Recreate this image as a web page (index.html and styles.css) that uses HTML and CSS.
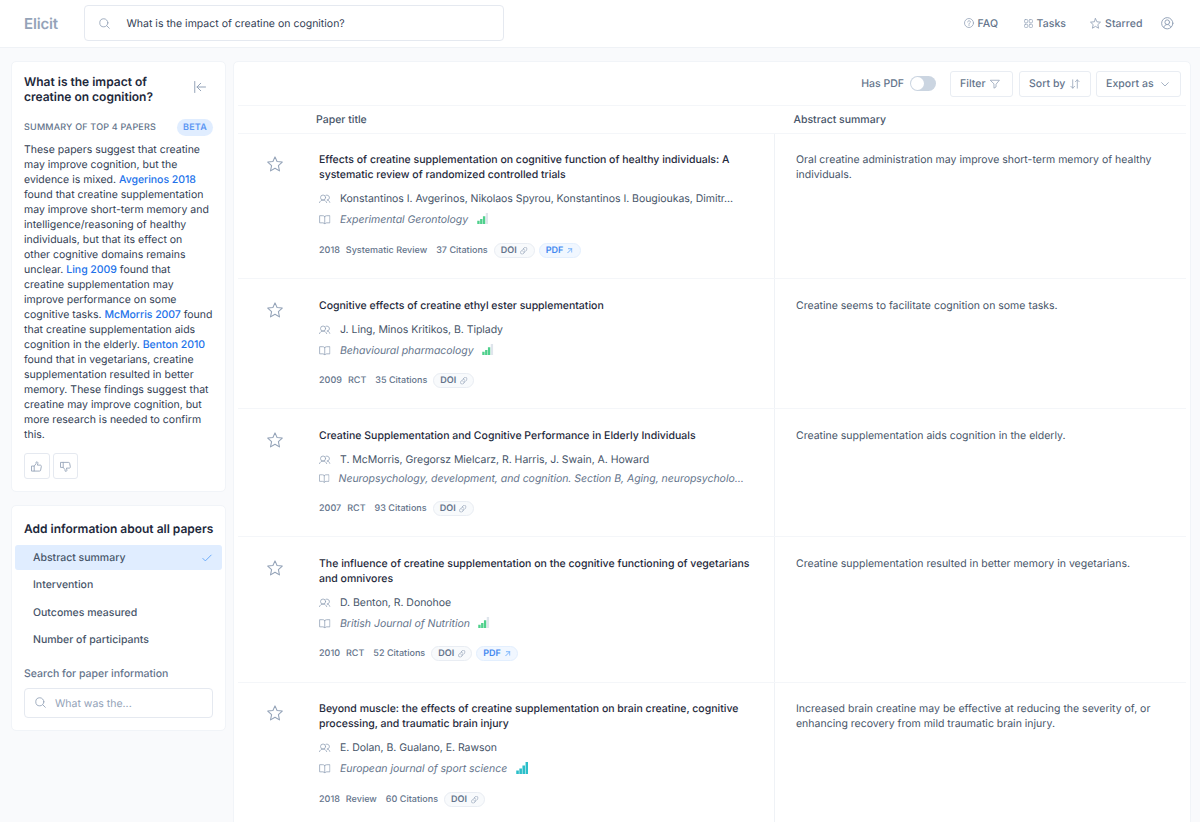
FILE: index.html
```html
<!DOCTYPE html>
<html lang="en">
<head>
<meta charset="utf-8">
<title>Elicit</title>
<link rel="stylesheet" href="styles.css">
</head>
<body>
<svg class="sprite" aria-hidden="true">
  <symbol id="search" viewBox="0 0 24 24"><circle cx="10.5" cy="10.5" r="8.8"/><path d="M17 17 22.500 22.500"/></symbol>
  <symbol id="star" viewBox="0 0 24 24"><path d="M12 1.300 15.100 8.300 22.900 9.100 17.100 14.400 18.700 22.300 12 18.300 5.300 22.300 6.900 14.400 1.100 9.100 8.900 8.300Z"/></symbol>
  <symbol id="users" viewBox="0 0 24 18"><circle cx="8.500" cy="6.500" r="5.300"/><path d="M1 17c1.500-3.500 4-5.200 7.500-5.200s6 1.700 7.500 5.200M14.500 1.700a5.200 5.200 0 1 1 2 10c3 0 5 2 6.500 5.300"/></symbol>
  <symbol id="book" viewBox="0 0 24 20"><path d="M12 3.500c-1-1.500-2.500-2-4-2H1.200v15H8c2 0 3 .8 4 2.500 1-1.700 2-2.500 4-2.500h6.800v-15H16c-1.500 0-3 .5-4 2Zm0 0v15"/></symbol>
  <symbol id="link" viewBox="0 0 24 24"><path d="m10 6 3.500-3.500a5 5 0 0 1 7.500 7.500l-5 5a4.600 4.600 0 0 1-7-.5M14 18l-3.500 3.500A5 5 0 0 1 3 14l5-5a4.600 4.600 0 0 1 7 .5"/></symbol>
  <symbol id="out" viewBox="0 0 24 24"><path d="M3 21 21 3M6 3h15v15"/></symbol>
  <symbol id="bars" viewBox="0 0 24 24"><path d="M0 17h5.200v7H0zM6.200 13h5.200v11H6.200zM12.400 7h5.200v17h-5.200z"/><path class="last" d="M18.600 0h5.200v24h-5.200z"/></symbol>
</svg>

<header class="topbar">
  <div class="logo">Elicit</div>
  <div class="search"><svg class="icon"><use href="#search"/></svg><span>What is the impact of creatine on cognition?</span></div>
  <nav class="nav">
    <a class="faq"><svg class="icon" viewBox="0 0 24 24"><circle cx="12" cy="12" r="10.800"/><path d="M8.800 9.500c0-4 6.500-4 6.500 0 0 2.300-3.300 2.300-3.300 5M12 16.800v1.200"/></svg>FAQ</a>
    <a class="tasks"><svg class="icon" viewBox="0 0 24 24"><rect x="1.500" y="1.500" width="8.500" height="8.500" rx="2"/><rect x="14" y="1.500" width="8.500" height="8.500" rx="2"/><rect x="1.500" y="14" width="8.500" height="8.500" rx="2"/><rect x="14" y="14" width="8.500" height="8.500" rx="2"/></svg>Tasks</a>
    <a class="starred"><svg class="icon"><use href="#star"/></svg>Starred</a>
    <svg class="icon user" viewBox="0 0 24 24"><circle cx="12" cy="12" r="10.800"/><circle cx="12" cy="10" r="4.500"/><path d="M5.500 20c.5-3.500 3-5.500 6.500-5.500s6 2 6.500 5.500"/></svg>
  </nav>
</header>

<div class="layout">
  <aside class="side">
    <section class="card summary">
      <div class="summary-head">
        <h1>What is the impact of creatine on cognition?</h1>
        <svg class="icon collapse" viewBox="0 0 24 24"><path d="M1.500 1v22M23 12H6M13.500 4.500 6 12l7.500 7.500"/></svg>
      </div>
      <div class="summary-label"><span>SUMMARY OF TOP 4 PAPERS</span><b class="beta">BETA</b></div>
      <p class="summary-text">These papers suggest that creatine<br>may improve cognition, but the<br>evidence is mixed. <a>Avgerinos 2018</a><br>found that creatine supplementation<br>may improve short-term memory and<br>intelligence/reasoning of healthy<br>individuals, but that its effect on<br>other cognitive domains remains<br>unclear. <a>Ling 2009</a> found that<br>creatine supplementation may<br>improve performance on some<br>cognitive tasks. <a>McMorris 2007</a> found<br>that creatine supplementation aids<br>cognition in the elderly. <a>Benton 2010</a><br>found that in vegetarians, creatine<br>supplementation resulted in better<br>memory. These findings suggest that<br>creatine may improve cognition, but<br>more research is needed to confirm<br>this.</p>
      <div class="votes">
        <span class="vote"><svg class="icon" viewBox="0 0 24 24"><path d="M2 11h5v11H2zM7 11l4-5V2.500C13.500 1 15.500 2.500 15 5l-1 4h6c2 0 2.800 1.300 2.500 3l-1.500 8c-.3 1.500-1 2-2.500 2H7"/></svg></span>
        <span class="vote"><svg class="icon" viewBox="0 0 24 24"><path d="M2 3h5v11H2zM7 14l4 5v3c2.500 1.500 4.500 0 4-2.500l-1-4h6c2 0 2.800-1.300 2.500-3L21 5c-.3-1.500-1-2-2.500-2H7"/></svg></span>
      </div>
    </section>
    <section class="card info">
      <h2>Add information about all papers</h2>
      <ul class="fields">
        <li class="active">Abstract summary<svg class="icon check" viewBox="0 0 24 24"><path d="m2 13 6 6L22 5"/></svg></li>
        <li>Intervention</li>
        <li>Outcomes measured</li>
        <li>Number of participants</li>
      </ul>
      <label class="find-label">Search for paper information</label>
      <div class="find"><svg class="icon"><use href="#search"/></svg><span>What was the...</span></div>
    </section>
  </aside>

  <main class="panel">
    <div class="toolbar">
      <span class="haspdf">Has PDF</span><span class="toggle"></span>
      <span class="btn filter">Filter<svg class="icon" viewBox="0 0 24 24"><path d="M1.500 3h21L14.500 12.500V19l-5 3v-9.500Z"/></svg></span>
      <span class="btn sort">Sort by<svg class="icon" viewBox="0 0 24 24"><path d="M6.500 2v20M2 17.500 6.500 22l4.500-4.500M17.500 22V2M13 6.500 17.500 2 22 6.500"/></svg></span>
      <span class="btn export">Export as<svg class="icon" viewBox="0 0 24 24"><path d="m2 8 10 10L22 8"/></svg></span>
    </div>
    <div class="thead"><span>Paper title</span><span>Abstract summary</span></div>

    <article class="row first">
      <svg class="icon star"><use href="#star"/></svg>
      <div class="paper">
        <h3>Effects of creatine supplementation on cognitive function of healthy individuals: A<br>systematic review of randomized controlled trials</h3>
        <div class="line authors"><svg class="icon"><use href="#users"/></svg>Konstantinos I. Avgerinos, Nikolaos Spyrou, Konstantinos I. Bougioukas, Dimitr...</div>
        <div class="line journal"><svg class="icon"><use href="#book"/></svg><i>Experimental Gerontology</i><svg class="bars"><use href="#bars"/></svg></div>
        <div class="meta"><span>2018</span><span class="kind">Systematic Review</span><span>37 Citations</span><b class="pill">DOI<svg class="icon"><use href="#link"/></svg></b><b class="pill pdf">PDF<svg class="icon"><use href="#out"/></svg></b></div>
      </div>
      <p class="abstract">Oral creatine administration may improve short-term memory of healthy<br>individuals.</p>
    </article>

    <article class="row short">
      <svg class="icon star"><use href="#star"/></svg>
      <div class="paper">
        <h3>Cognitive effects of creatine ethyl ester supplementation</h3>
        <div class="line authors"><svg class="icon"><use href="#users"/></svg>J. Ling, Minos Kritikos, B. Tiplady</div>
        <div class="line journal"><svg class="icon"><use href="#book"/></svg><i>Behavioural pharmacology</i><svg class="bars"><use href="#bars"/></svg></div>
        <div class="meta"><span>2009</span><span class="kind">RCT</span><span>35 Citations</span><b class="pill">DOI<svg class="icon"><use href="#link"/></svg></b></div>
      </div>
      <p class="abstract">Creatine seems to facilitate cognition on some tasks.</p>
    </article>

    <article class="row compact">
      <svg class="icon star"><use href="#star"/></svg>
      <div class="paper">
        <h3>Creatine Supplementation and Cognitive Performance in Elderly Individuals</h3>
        <div class="line authors"><svg class="icon"><use href="#users"/></svg>T. McMorris, Gregorsz Mielcarz, R. Harris, J. Swain, A. Howard</div>
        <div class="line journal"><svg class="icon"><use href="#book"/></svg><i>Neuropsychology, development, and cognition. Section B, Aging, neuropsycholo...</i></div>
        <div class="meta"><span>2007</span><span class="kind">RCT</span><span>93 Citations</span><b class="pill">DOI<svg class="icon"><use href="#link"/></svg></b></div>
      </div>
      <p class="abstract">Creatine supplementation aids cognition in the elderly.</p>
    </article>

    <article class="row">
      <svg class="icon star"><use href="#star"/></svg>
      <div class="paper">
        <h3>The influence of creatine supplementation on the cognitive functioning of vegetarians<br>and omnivores</h3>
        <div class="line authors"><svg class="icon"><use href="#users"/></svg>D. Benton, R. Donohoe</div>
        <div class="line journal"><svg class="icon"><use href="#book"/></svg><i>British Journal of Nutrition</i><svg class="bars"><use href="#bars"/></svg></div>
        <div class="meta"><span>2010</span><span class="kind">RCT</span><span>52 Citations</span><b class="pill">DOI<svg class="icon"><use href="#link"/></svg></b><b class="pill pdf">PDF<svg class="icon"><use href="#out"/></svg></b></div>
      </div>
      <p class="abstract">Creatine supplementation resulted in better memory in vegetarians.</p>
    </article>

    <article class="row final">
      <svg class="icon star"><use href="#star"/></svg>
      <div class="paper">
        <h3>Beyond muscle: the effects of creatine supplementation on brain creatine, cognitive<br>processing, and traumatic brain injury</h3>
        <div class="line authors"><svg class="icon"><use href="#users"/></svg>E. Dolan, B. Gualano, E. Rawson</div>
        <div class="line journal"><svg class="icon"><use href="#book"/></svg><i>European journal of sport science</i><svg class="bars full"><use href="#bars"/></svg></div>
        <div class="meta"><span>2018</span><span class="kind">Review</span><span>60 Citations</span><b class="pill">DOI<svg class="icon"><use href="#link"/></svg></b></div>
      </div>
      <p class="abstract">Increased brain creatine may be effective at reducing the severity of, or<br>enhancing recovery from mild traumatic brain injury.</p>
    </article>
  </main>
</div>
</body>
</html>
```
FILE: styles.css
```css
* { box-sizing: border-box; }
body {
  margin: 0; height: 822px; overflow: hidden;
  background: #f9fafc; color: #475569;
  font: 400 10.5px/15px Inter, sans-serif;
  text-rendering: geometricPrecision;
  white-space: nowrap;
}
h1, h2, h3, p, ul { margin: 0; padding: 0; }
ul { list-style: none; }
.sprite { display: none; }
.icon { fill: none; stroke: #94a3b8; stroke-width: 1.9; stroke-linejoin: round; stroke-linecap: round; flex: none; width: 11px; height: 11px; overflow: visible; }

.topbar { display: flex; align-items: flex-start; height: 48px; padding: 5px 26.500px 0 24px; background: #fff; border-bottom: 1px solid #eff2f6; }
.logo { width: 60px; padding-top: 1px; color: #94a3b8; font-size: 15px; font-weight: 600; line-height: 36px; letter-spacing: -.15px; }
.search { display: flex; align-items: center; gap: 16.500px; width: 420px; height: 36px; padding-left: 14px; border: 1px solid #e5e9f0; border-radius: 4px; color: #334155; }
.nav { display: flex; align-items: center; margin-left: auto; height: 36px; color: #64748b; font-weight: 500; letter-spacing: .05px; }
.nav a { display: flex; align-items: center; gap: 4px; }
.nav .faq { margin-right: 25.500px; }
.nav .tasks { margin-right: 24px; }
.nav .faq .icon { width: 10px; height: 10px; }
.nav .tasks .icon { width: 9px; height: 9px; }
.nav .starred { margin-right: 18.500px; }
.nav .user { width: 12.500px; height: 12.500px; }

.layout { display: flex; gap: 7px; padding: 13px 9px 0 11px; }
.card, .panel { background: #fff; border: 1px solid #f1f4f8; border-radius: 5px; }
.side { width: 215px; flex: none; display: flex; flex-direction: column; gap: 13px; }
.card { padding: 0 12px; }
.summary { height: 431px; padding-top: 12px; }
.summary-head { display: flex; justify-content: space-between; padding-right: 7px; }
.summary h1 { width: 140px; white-space: normal; font-size: 12px; font-weight: 600; line-height: 15px; color: #1e293b; }
.collapse { width: 12px; height: 12px; margin-top: 6.500px; stroke-width: 2; }
.summary-label { display: flex; align-items: center; justify-content: space-between; margin-top: 15px; height: 17px; font-size: 9px; font-weight: 500; color: #64748b; letter-spacing: .2px; }
.beta { width: 36px; height: 17px; line-height: 17px; text-align: center; border-radius: 9px; background: #e0edff; color: #5b96f3; font-weight: 600; }
.summary-text { margin-top: 6px; color: #334155; }
.summary-text a { color: #2272ea; font-weight: 500; letter-spacing: -.04px; }
.votes { display: flex; gap: 3px; margin-top: 11px; }
.vote { display: grid; place-items: center; width: 25.500px; height: 26px; border: 1px solid #e5e9f0; border-radius: 3px; }
.info { height: 226px; padding-top: 14px; }
.info h2 { font-size: 12px; line-height: 18px; font-weight: 600; color: #1e293b; }
.fields { margin: 7px -9px 0; color: #475569; font-weight: 500; }
.fields li { display: flex; align-items: center; justify-content: space-between; height: 25px; margin-bottom: 2.400px; padding: 0 10px 0 18px; border-radius: 3px; }
.fields .active { background: #e0edff; }
.check { width: 10px; height: 10px; stroke: #60a5fa; stroke-width: 2.200; }
.find-label { display: block; margin-top: 13.400px; font-weight: 500; color: #64748b; }
.find { display: flex; align-items: center; gap: 9px; height: 30px; margin-top: 7px; padding-left: 10px; border: 1px solid #e5e9f0; border-radius: 4px; color: #94a3b8; }
.find span { padding-top: 2px; }

.panel { flex: 1; height: 800px; padding: 0 4px; }
.toolbar { display: flex; align-items: center; height: 44px; padding-right: 5px; justify-content: flex-end; color: #64748b; font-weight: 500; border-bottom: 1px solid #f4f6f9; }
.toggle { width: 26px; height: 15px; margin: 0 14px 0 6px; border-radius: 8px; background: #cbd5e1; }
.toggle::after { content: ""; display: block; width: 13px; height: 13px; margin: 1px; border-radius: 50%; background: #fff; }
.btn { display: flex; align-items: center; justify-content: space-between; height: 26px; padding: 0 12px 0 9px; border: 1px solid #e9edf3; border-radius: 3px; letter-spacing: .05px; }
.btn .icon { width: 10px; height: 10px; }
.filter { width: 63px; margin-right: 6px; }
.sort { width: 72px; margin-right: 5px; padding-right: 10px; }
.export { width: 85px; padding-right: 11px; }
.btn.export .icon { width: 8px; height: 8px; stroke-width: 2.500; }
.thead { display: grid; grid-template-columns: 477.500px 1fr; height: 28px; padding-left: 78px; line-height: 27px; font-weight: 500; color: #475569; border-bottom: 1px solid #f4f6f9; }

.row { display: grid; grid-template-columns: 81px 455.500px 1fr; border-bottom: 1px solid #f4f6f9; height: 146px; }
.first { height: 145px; }
.short { height: 130px; }
.compact { height: 128px; }
.star { width: 16px; height: 16px; margin: 22.500px 0 0 29px; stroke-width: 1.600; }
.paper { padding-top: 19px; border-right: 1px solid #eff2f6; }
h3 { font-size: 10.500px; line-height: 15px; font-weight: 500; color: #1e293b; }
.line { display: flex; align-items: center; gap: 9.500px; height: 15px; color: #475569; letter-spacing: -.035px; }
.authors { margin-top: 9px; }
.journal { margin-top: 6px; color: #64748b; }
.line .icon { width: 11.500px; height: 9.500px; stroke-width: 1.700; }
.bars { width: 11.500px; height: 11px; margin: -2px 0 0 -1px; fill: #4fd08c; --last: #dfe5ec; }
.last { fill: var(--last); }
.full { width: 12.500px; height: 12px; fill: #2bbfc9; --last: #2bbfc9; }
.compact .journal { margin-top: 4px; gap: 9px; }
.compact .journal .icon { width: 10.500px; height: 9px; }
.meta { display: flex; align-items: center; height: 15px; margin-top: 15px; font-size: 9px; font-weight: 500; color: #64748b; letter-spacing: .02px; }
.kind { margin: 0 9px 0 6px; }
.pill { display: flex; align-items: center; justify-content: space-between; width: 41px; height: 15px; margin-left: 6px; padding: 0 6px; border: 1px solid #e9edf3; border-radius: 8px; background: #f8fafc; font-weight: 600; }
.pill .icon { width: 7.500px; height: 7.500px; stroke-width: 2.400; }
.pdf { width: 42px; margin-left: 4px; padding-right: 7px; background: #f1f7ff; border-color: #e3effe; color: #4388f0; }
.pill.pdf .icon { width: 5.500px; height: 5.500px; stroke: #60a5fa; stroke-width: 3.500; }
.abstract { padding: 19px 0 0 21.500px; }
.first .paper, .first .abstract, .final .paper, .final .abstract { padding-top: 18px; }
.first .meta, .final .meta { margin-top: 16px; }
.first .star, .final .star { margin-top: 22px; }
```
